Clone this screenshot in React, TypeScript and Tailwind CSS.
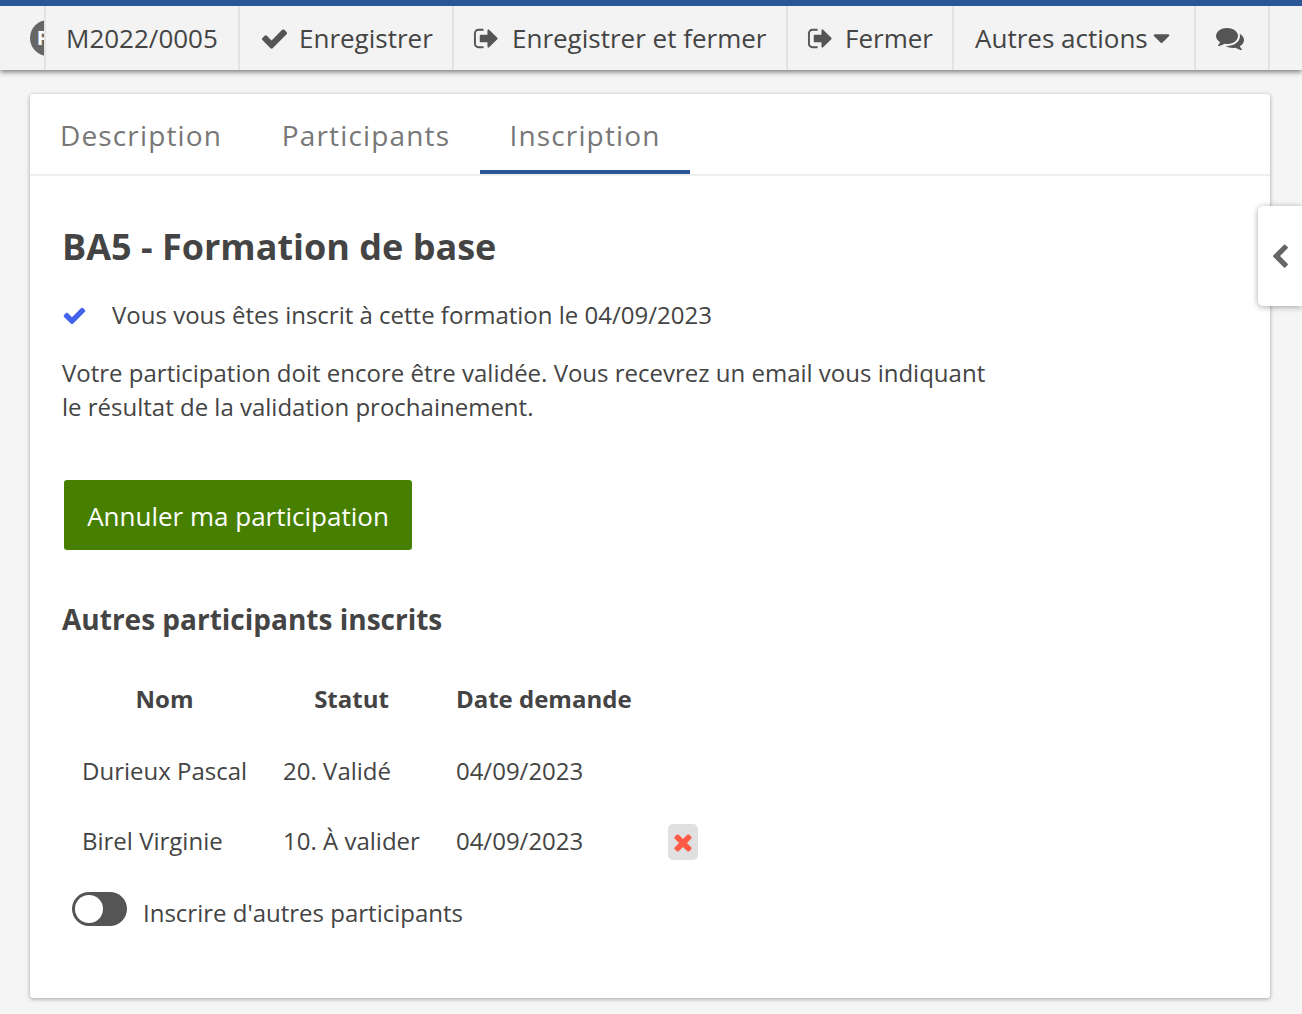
import { FaCaretDown } from "react-icons/fa";

const font = { fontFamily: '"Open Sans", sans-serif' };

// Font Awesome 4 glyphs, the ones in the package are a later, thinner drawing
const paths = {
  check: "M1671 566q0 40-28 68l-724 724-136 136q-28 28-68 28t-68-28l-136-136-362-362q-28-28-28-68t28-68l136-136q28-28 68-28t68 28l294 295 656-657q28-28 68-28t68 28l136 136q28 28 28 68z",
  times: "M1490 1322q0 40-28 68l-136 136q-28 28-68 28t-68-28l-294-294-294 294q-28 28-68 28t-68-28l-136-136q-28-28-28-68t28-68l294-294-294-294q-28-28-28-68t28-68l136-136q28-28 68-28t68 28l294 294 294-294q28-28 68-28t68 28l136 136q28 28 28 68t-28 68l-294 294 294 294q28 28 28 68z",
  chevron: "M1427 301l-531 531 531 531q19 19 19 45t-19 45l-166 166q-19 19-45 19t-45-19l-742-742q-19-19-19-45t19-45l742-742q19-19 45-19t45 19l166 166q19 19 19 45t-19 45z",
  signOut: "M704 1440q0 4 1 20t.5 26.500-3 23.500-10 19.500-20.500 6.500h-320q-119 0-203.500-84.500t-84.500-203.500v-704q0-119 84.500-203.500t203.500-84.500h320q13 0 22.500 9.500t9.500 22.500q0 4 1 20t.5 26.500-3 23.500-10 19.500-20.500 6.500h-320q-66 0-113 47t-47 113v704q0 66 47 113t113 47h312l11.500 1 11.500 3 8 5.500 7 9 2 13.500zm928-544q0 26-19 45l-544 544q-19 19-45 19t-45-19-19-45v-288h-448q-26 0-45-19t-19-45v-384q0-26 19-45t45-19h448v-288q0-26 19-45t45-19 45 19l544 544q19 19 19 45z",
  comments: "M1408 768q0 139-94 257t-256.500 186.500-353.500 68.500q-86 0-176-16-124 88-278 128-36 9-86 16h-3q-11 0-20.500-8t-11.500-21q-1-3-1-6.500t.5-6.500 2-6l2.500-5 3.500-5.500 4-5 4.500-5 4-4.500q5-6 23-25t26-29.500 22.500-29 25-38.500 20.500-44q-124-72-195-177t-71-224q0-139 94-257t256.500-186.500 353.500-68.500 353.500 68.500 256.500 186.500 94 257zm384 256q0 120-71 224.500t-195 176.500q10 24 20.500 44t25 38.500 22.500 29 26 29.500 23 25q1 1 4 4.500t4.500 5 4 5 3.500 5.500l2.500 5 2 6 .5 6.500-1 6.500q-3 14-13 22t-22 7q-50-7-86-16-154-40-278-128-90 16-176 16-271 0-472-132 58 4 88 4 161 0 309-45t264-129q125-92 192-212t67-254q0-77-23-152 129 71 204 178t75 230z",
};

function Fa({ d, className }: { d: string; className: string }) {
  return (
    <svg viewBox="0 0 1792 1792" className={`shrink-0 ${className}`}>
      <path d={d} />
    </svg>
  );
}

function ToolbarItem({ icon, label, className }: { icon?: React.ReactNode; label: string; className: string }) {
  return (
    <div className={`flex h-full shrink-0 items-center border-r-2 border-[#e3e3e3] ${className}`}>
      {icon}
      <span>{label}</span>
    </div>
  );
}

export default function App() {
  const rows = [
    { name: "Durieux Pascal", status: "20. Validé", date: "04/09/2023", canDelete: false },
    { name: "Birel Virginie", status: "10. À valider", date: "04/09/2023", canDelete: true },
  ];

  return (
    <div style={font} className="relative h-[1014px] w-[1302px] overflow-hidden bg-[#f5f5f5] text-[24px] text-[#444]">
      <header className="relative z-10 h-[70px] border-t-[6px] border-[#2b5797] bg-[#f3f3f3] text-[26px] text-[#444] shadow-[0_2px_5px_rgba(0,0,0,0.5)]">
        <div className="flex h-full items-stretch">
          <div className="flex h-full w-[46px] shrink-0 items-center overflow-hidden border-r-2 border-[#e3e3e3] pl-[30px]">
            <div className="flex h-[36px] w-[36px] shrink-0 items-center justify-center rounded-full bg-[#666] text-[20px] font-bold text-white">
              <span className="-ml-[10px]">P</span>
            </div>
          </div>
          <ToolbarItem label="M2022/0005" className="w-[194px] pl-[20px]" />
          <ToolbarItem icon={<Fa d={paths.check} className="mr-[10px] h-[29px] w-[29px] fill-[#555]" />} label="Enregistrer" className="w-[214px] pl-[20px]" />
          <ToolbarItem icon={<Fa d={paths.signOut} className="mr-[12px] h-[27px] w-[27px] fill-[#555]" />} label="Enregistrer et fermer" className="w-[334px] pl-[19px]" />
          <ToolbarItem icon={<Fa d={paths.signOut} className="mr-[11px] h-[27px] w-[27px] fill-[#555]" />} label="Fermer" className="w-[166px] pl-[19px]" />
          <div className="flex h-full w-[242px] shrink-0 items-center border-r-2 border-[#e3e3e3] pl-[21px]">
            <span>Autres actions</span>
            <FaCaretDown className="-translate-y-px text-[27px] text-[#555]" />
          </div>
          <div className="flex h-full w-[74px] shrink-0 items-center border-r-2 border-[#e3e3e3] pl-[20px]">
            <Fa d={paths.comments} className="h-[28px] w-[28px] fill-[#555]" />
          </div>
        </div>
      </header>

      <main className="mt-[24px] ml-[30px] h-[904px] w-[1240px] rounded-[3px] bg-white shadow-[0_1px_4px_rgba(0,0,0,0.35)]">
        <nav className="flex h-[82px] items-start border-b-2 border-[#eeeeee] text-[28px] tracking-[1.15px] text-[#777]">
          <div className="flex h-[80px] w-[222px] items-center justify-center pt-[2px]">Description</div>
          <div className="flex h-[80px] w-[228px] items-center justify-center pt-[2px]">Participants</div>
          <div className="flex h-[80px] w-[210px] items-center justify-center border-b-4 border-b-[#2b5797] pt-[6px]">Inscription</div>
        </nav>

        <section className="px-[32px] pt-[46px]">
          <h1 className="text-[36px] leading-[50px] font-bold">BA5 - Formation de base</h1>
          <div className="mt-[26px] flex h-[34px] items-center">
            <Fa d={paths.check} className="h-[25px] w-[25px] fill-[#4263eb]" />
            <span className="ml-[25px]">Vous vous êtes inscrit à cette formation le 04/09/2023</span>
          </div>
          <p className="mt-[24px] w-[930px] leading-[34px]">
            Votre participation doit encore être validée. Vous recevrez un email vous indiquant le résultat de la validation prochainement.
          </p>
          <button type="button" className="mt-[56px] ml-[2px] block h-[70px] w-[348px] rounded-[3px] bg-[#478000] pt-[2px] text-[26px] text-white">
            Annuler ma participation
          </button>
          <h2 className="mt-[49px] text-[28px] leading-[40px] font-bold">Autres participants inscrits</h2>

          <table className="mt-[24px] ml-[2px] border-collapse">
            <thead>
              <tr className="h-[73px] text-center">
                <th className="px-[18px] pb-[2px] font-bold">Nom</th>
                <th className="px-[18px] pb-[2px] font-bold">Statut</th>
                <th className="px-[18px] pb-[2px] text-left font-bold">Date demande</th>
                <th className="w-[66px]" />
              </tr>
            </thead>
            <tbody>
              {rows.map((row) => (
                <tr key={row.name} className="h-[70px]">
                  <td className="px-[18px]">{row.name}</td>
                  <td className="px-[18px]">{row.status}</td>
                  <td className="px-[18px]">{row.date}</td>
                  <td className="px-[18px]">
                    {row.canDelete && (
                      <div className="mt-px flex h-[36px] w-[30px] items-center justify-center rounded-[5px] bg-[#e0e0e0]">
                        <Fa d={paths.times} className="h-[26px] w-[26px] fill-[#ff5a45]" />
                      </div>
                    )}
                  </td>
                </tr>
              ))}
            </tbody>
          </table>

          <div className="mt-[16px] ml-[10px] flex items-start">
            <div className="flex h-[34px] w-[55px] items-center rounded-full bg-[#555] pl-[3px]">
              <div className="h-[28px] w-[28px] rounded-full bg-white" />
            </div>
            <span className="mt-[4px] ml-[16px] leading-[34px]">Inscrire d'autres participants</span>
          </div>
        </section>
      </main>

      <div className="absolute top-[206px] right-0 flex h-[100px] w-[44px] items-center justify-center rounded-l-[5px] bg-white pt-[2px] shadow-[0_1px_6px_rgba(0,0,0,0.35)]">
        <Fa d={paths.chevron} className="h-[26px] w-[26px] fill-[#666]" />
      </div>
    </div>
  );
}
